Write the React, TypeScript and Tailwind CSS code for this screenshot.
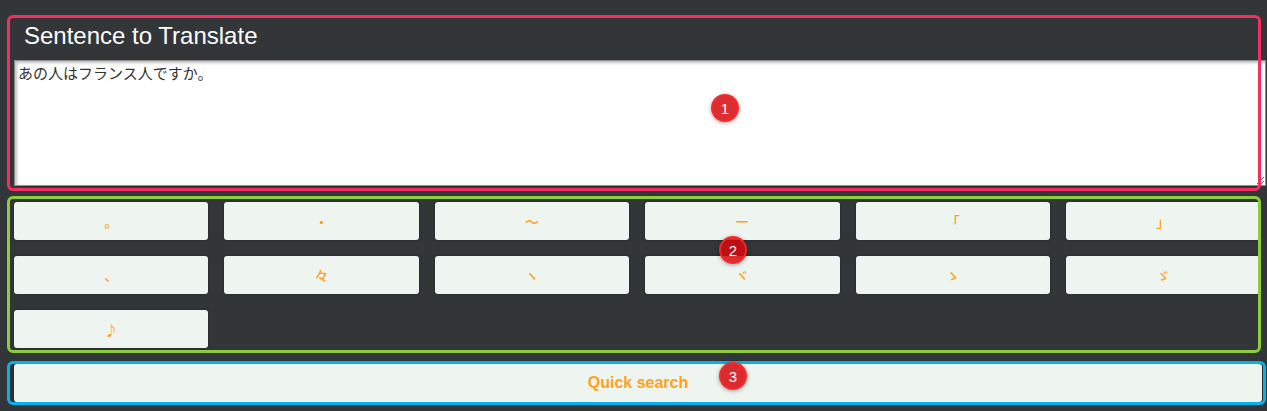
import React from 'react';

const keys = ['。', '・', '〜', 'ー', '「', '」', '、', '々', 'ヽ', 'ヾ', 'ゝ', 'ゞ', '♪'];

const Badge: React.FC<{ n: number; className: string }> = ({ n, className }) => (
  <div
    className={`absolute w-[28px] h-[28px] rounded-full bg-[rgba(214,8,14,0.85)] border-2 border-[rgba(255,40,40,0.85)] shadow-[0_1px_4px_rgba(0,0,0,0.35)] flex items-center justify-center text-white text-[15px] leading-none font-['Liberation_Sans',sans-serif] ${className}`}
  >
    {n}
  </div>
);

const App: React.FC = () => {
  return (
    <div className="relative w-[1267px] h-[411px] overflow-hidden bg-[#323639] pt-[18px] pl-[14px] pr-px font-['Liberation_Sans','Noto_Sans_CJK_JP',sans-serif]">
      {/* Sentence section */}
      <div className="relative">
        <div className="h-[42px] pt-[2px] pl-[10px] text-[24px] leading-8 text-white">Sentence to Translate</div>
        <textarea
          className="block w-full h-[126px] bg-white border border-[#8c8c8c] px-[3px] pt-[2px] text-[15px] leading-5 text-[#333] font-['Noto_Sans_CJK_JP',sans-serif] shadow-[inset_2px_2px_3px_rgba(0,0,0,0.25)] outline-none"
          defaultValue="あの人はフランス人ですか。"
        />
        <div className="absolute -left-[7px] -top-[3px] right-[5px] -bottom-[5px] border-[3px] border-[#f72c60] rounded-[6px] pointer-events-none" />
      </div>

      {/* Special characters */}
      <div className="relative mt-[16px]">
        <div className="grid grid-cols-[repeat(6,194.4px)] gap-x-[16px] gap-y-[16px]">
          {keys.map((k) => (
            <button
              key={k}
              className="h-[38px] rounded-[3px] bg-[#eef4f0] text-[#ffa21a] text-[14px] font-medium font-['Noto_Sans_CJK_JP',sans-serif] shadow-[0_0_3px_rgba(0,0,0,0.35)] flex items-center justify-center"
            >
              {k}
            </button>
          ))}
        </div>
        <div className="absolute -left-[7px] -top-[6px] right-[5px] -bottom-[5px] border-[3px] border-[#8ccd3c] rounded-[6px] pointer-events-none" />
      </div>

      {/* Quick search */}
      <div className="relative mt-[16px] mr-[4px]">
        <button className="w-full h-[38px] rounded-[3px] bg-[#eef4f0] text-[#ffa21a] text-[16px] font-bold shadow-[0_0_4px_rgba(0,0,0,0.4)]">
          Quick search
        </button>
        <div className="absolute -left-[7px] -top-[3px] -right-[4px] -bottom-[3px] border-[3px] border-[#06b2ec] rounded-[6px] pointer-events-none" />
      </div>

      <Badge n={1} className="left-[711px] top-[94px]" />
      <Badge n={2} className="left-[719px] top-[236px]" />
      <Badge n={3} className="left-[719px] top-[362px]" />
    </div>
  );
};

export default App;
